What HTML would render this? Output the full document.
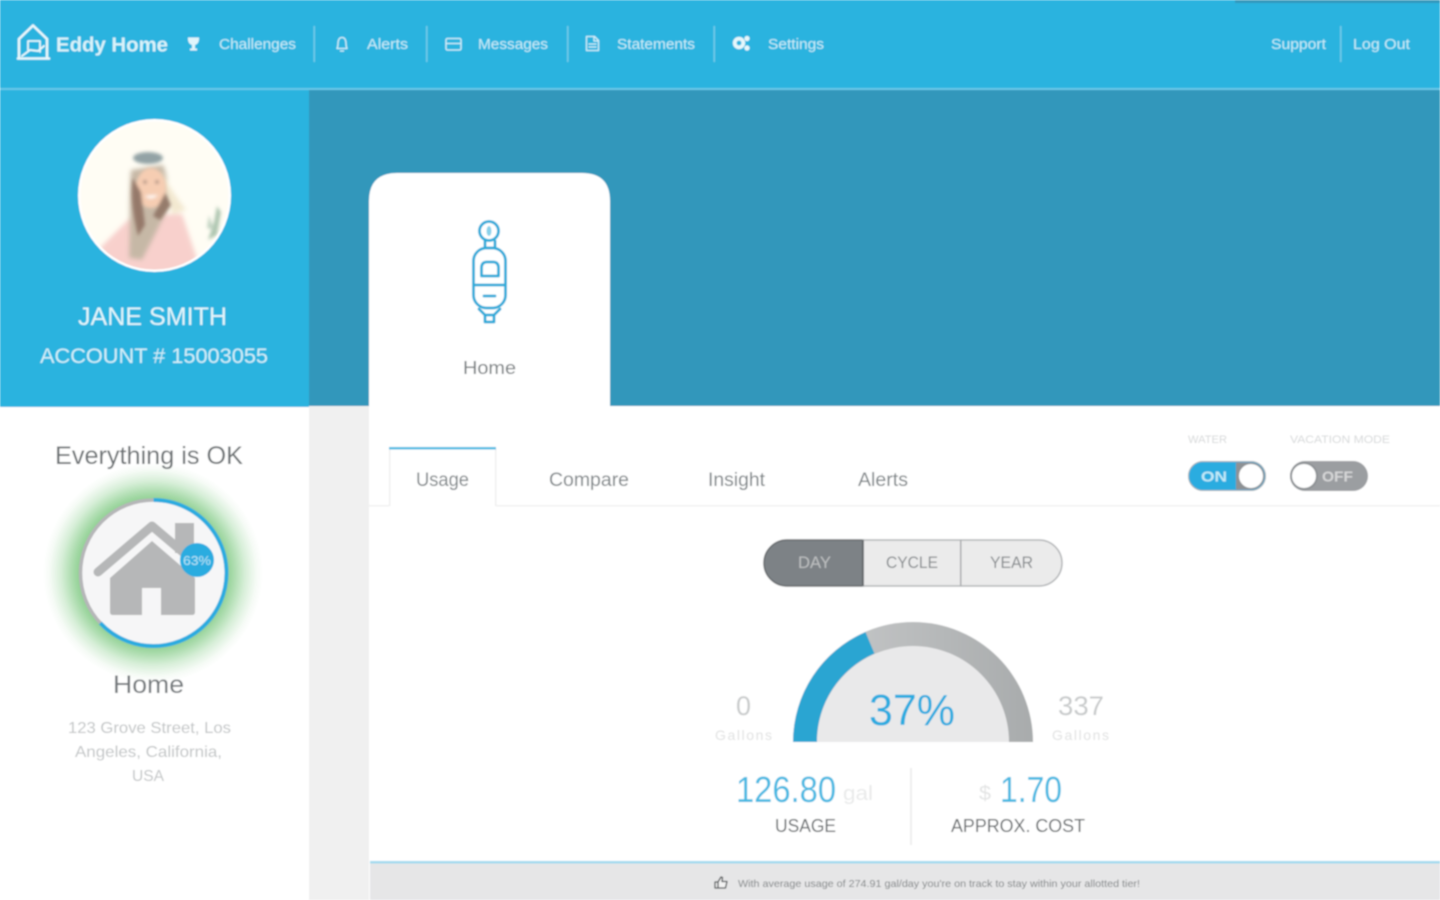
<!DOCTYPE html>
<html lang="en"><head><meta charset="utf-8"><title>Eddy Home</title>
<style>
html,body{margin:0;padding:0;width:1440px;height:900px;overflow:hidden;background:#fff}
svg{display:block;position:absolute;left:0;top:0}
text{font-family:"Liberation Sans",sans-serif}
.nav{fill:#c9edf8;font-size:15px}
.tab{fill:#7d8386;font-size:19px}
</style></head><body>
<svg width="1440" height="900" viewBox="0 0 1440 900" xmlns="http://www.w3.org/2000/svg">
<defs>
<filter id="soft" x="-2%" y="-2%" width="104%" height="104%"><feGaussianBlur stdDeviation="0.75"/></filter>
<filter id="photo" x="-20%" y="-20%" width="140%" height="140%"><feGaussianBlur stdDeviation="2.4"/></filter>
<filter id="photoS" x="-20%" y="-20%" width="140%" height="140%"><feGaussianBlur stdDeviation="1.6"/></filter>
<radialGradient id="glow" gradientUnits="userSpaceOnUse" cx="153" cy="573" r="110">
<stop offset="0.64" stop-color="#86cc89"/><stop offset="0.73" stop-color="#a9dbab"/><stop offset="0.84" stop-color="#d8efd9"/><stop offset="0.94" stop-color="#f6fbf6"/><stop offset="1" stop-color="#fff"/>
</radialGradient>
<clipPath id="av"><circle cx="154.500" cy="195.500" r="74"/></clipPath>
<clipPath id="gaugeClip"><rect x="780" y="610" width="270" height="132"/></clipPath>
<linearGradient id="ringGray" x1="0" y1="0" x2="1" y2="0"><stop offset="0.3" stop-color="#c0c2c3"/><stop offset="1" stop-color="#a8abac"/></linearGradient>
</defs>
<g filter="url(#soft)">
<!-- base regions -->
<rect width="1440" height="900" fill="#fff"/>
<rect width="1440" height="89" fill="#2bb3df"/>
<rect x="1235" y="0" width="205" height="3" fill="#3097bb"/>
<rect x="309" y="90" width="1131" height="316" fill="#3097bb"/>
<rect x="0" y="90" width="309" height="317" fill="#2bb3df"/>
<rect x="0" y="88" width="1440" height="2" fill="#69c8e8"/>
<rect x="309" y="406" width="60" height="494" fill="#f0f0f0"/>

<!-- logo -->
<g fill="none" stroke="#e8f8fc" stroke-width="2.600" stroke-linejoin="round" stroke-linecap="round">
<path d="M19 58V39L33 25.500 47 39V58"/>
<path d="M18 58.500H49"/>
<path d="M28 50V41H40V52" stroke-width="1.800"/>
<path d="M22 56L30 50L38 51L44 46" stroke-width="2"/>
</g>
<text x="56" y="51.500" font-size="20" font-weight="700" fill="#d9f3fa" textLength="112" lengthAdjust="spacingAndGlyphs">Eddy Home</text>

<!-- nav icons -->
<path d="M188 37.500H199C199.300 41.500 198 44 195 45V48.500H197V50.500H190V48.500H192V45C189 44 187.700 41.500 188 37.500Z" fill="#e0f5fb"/>
<g fill="none" stroke="#d6f1fa" stroke-width="1.300" stroke-linejoin="round" stroke-linecap="round">
<path d="M337 48.500C338.200 46.500 337.800 44 338.200 41.500C338.600 39 340 37.500 342 37.500C344 37.500 345.400 39 345.800 41.500C346.200 44 345.800 46.500 347 48.500Z"/>
<path d="M340.500 51H343.500"/>
<rect x="446" y="38.500" width="15" height="11.500" rx="1.500"/>
<path d="M446.500 43.500H460.500"/>
<path d="M586.500 36.500H594.500L598.500 40.500V50.500H586.500Z"/>
<path d="M589 44H596M589 47H596M594 37V41H598"/>
</g>
<g fill="#e6f7fb">
<circle cx="739" cy="43" r="6.200"/><circle cx="747" cy="38.500" r="2.600"/><circle cx="747" cy="48" r="2.600"/>
</g>
<circle cx="739" cy="43" r="2.400" fill="#2bb3df"/>

<!-- nav text -->
<text class="nav" x="219" y="49" textLength="77" lengthAdjust="spacingAndGlyphs">Challenges</text>
<text class="nav" x="367" y="49" textLength="41" lengthAdjust="spacingAndGlyphs">Alerts</text>
<text class="nav" x="478" y="49" textLength="70" lengthAdjust="spacingAndGlyphs">Messages</text>
<text class="nav" x="617" y="49" textLength="78" lengthAdjust="spacingAndGlyphs">Statements</text>
<text class="nav" x="768" y="49" textLength="56" lengthAdjust="spacingAndGlyphs">Settings</text>
<text class="nav" x="1271" y="49" textLength="55" lengthAdjust="spacingAndGlyphs">Support</text>
<text class="nav" x="1353" y="49" textLength="57" lengthAdjust="spacingAndGlyphs">Log Out</text>
<g fill="#72cbe9">
<rect x="313.500" y="26" width="1.500" height="36"/><rect x="426" y="26" width="1.500" height="36"/>
<rect x="567" y="26" width="1.500" height="36"/><rect x="713.500" y="26" width="1.500" height="36"/>
<rect x="1340" y="26" width="1.500" height="36"/>
</g>

<!-- avatar -->
<circle cx="154.500" cy="195.500" r="76.500" fill="#fff"/>
<circle cx="154.500" cy="195.500" r="74" fill="#fffdf4"/>
<g clip-path="url(#av)">
<g filter="url(#photo)">
<path d="M100 248L132 216L182 214L198 262L190 290H105Z" fill="#f8d0cc"/>
<path d="M131 170C129 195 130 225 129 258L142 260C150 245 160 225 166 212C170 200 168 175 163 165Z" fill="#c6b8a6"/>
<path d="M160 170C168 185 175 195 186 210L172 214Z" fill="#f3e8d0"/>
</g>
<g filter="url(#photoS)">
<ellipse cx="148" cy="158" rx="15" ry="6" fill="#93a3a5"/>
<ellipse cx="151" cy="188" rx="15" ry="20" fill="#f6cdb2"/>
<path d="M133 178C130 195 133 215 138 236L145 225L141 192Z" fill="#95796a"/>
<path d="M165 193L171 205L160 220L153 216Z" fill="#957c6c"/>
<circle cx="145" cy="182" r="1.600" fill="#85706a"/><circle cx="157" cy="182" r="1.600" fill="#85706a"/>
<path d="M145 196Q151 201 158 195Z" fill="#fff"/>
<path d="M208 240L214 222L217 206L221 212L217 235Z" fill="#aec6b0"/>
<path d="M209 215L214 230L207 228Z" fill="#c2d4c3"/>
</g>
</g>
<text x="78" y="325" font-size="25" fill="#e3f6fb" textLength="149" lengthAdjust="spacingAndGlyphs">JANE SMITH</text>
<text x="40" y="363" font-size="21" fill="#d3f0f9" textLength="228" lengthAdjust="spacingAndGlyphs">ACCOUNT # 15003055</text>

<!-- status panel -->
<circle cx="153" cy="573" r="110" fill="url(#glow)"/>
<text x="55" y="464" font-size="25" fill="#6b7072" textLength="188" lengthAdjust="spacingAndGlyphs">Everything is OK</text>
<circle cx="153.500" cy="573" r="73" fill="#f6f6f7"/>
<circle cx="153.500" cy="573" r="73" fill="none" stroke="#b5b6b8" stroke-width="3.500"/>
<path d="M153.500 500A73 73 0 1 1 100.300 623" fill="none" stroke="#2bace0" stroke-width="4"/>
<g fill="#b6b7b8">
<rect x="175" y="523" width="19" height="30"/>
<path d="M152 541L195 578V612Q195 615 192 615H161V588H142V615H113Q110 615 110 612V578Z"/>
</g>
<path d="M98 572L152 526L198 565" fill="none" stroke="#b6b7b8" stroke-width="9" stroke-linecap="round" stroke-linejoin="round"/>
<circle cx="197" cy="560" r="17" fill="#2bace0"/>
<text x="183" y="565" font-size="13" fill="#b9e6f6" textLength="28" lengthAdjust="spacingAndGlyphs">63%</text>
<text x="113" y="693" font-size="25" fill="#72777a" textLength="71" lengthAdjust="spacingAndGlyphs">Home</text>
<g font-size="16" fill="#c2c5c6">
<text x="68" y="733" textLength="163" lengthAdjust="spacingAndGlyphs">123 Grove Street, Los</text>
<text x="75" y="757" textLength="147" lengthAdjust="spacingAndGlyphs">Angeles, California,</text>
<text x="132" y="781" textLength="32" lengthAdjust="spacingAndGlyphs">USA</text>
</g>

<!-- content panel -->
<path d="M369 408V201Q369 173 397 173H582Q610 173 610 201V406H1440V900H369Z" fill="#fff"/>
<g fill="none" stroke="#2aabd9" stroke-width="2.800" stroke-linejoin="round" stroke-linecap="round">
<circle cx="489" cy="231" r="9.500"/>
<path d="M485 241V248H495V241"/>
<rect x="473.500" y="248" width="32" height="60" rx="13"/>
<path d="M474 285H505"/>
<path d="M481.500 276V268Q481.500 262 487 262H493Q498.500 262 498.500 268V276Z"/>
<path d="M484 296H495"/>
<path d="M479 309L485 315H494L500 309"/>
<path d="M485 315V322H494V315"/>
</g>
<ellipse cx="489" cy="231" rx="2.500" ry="5" fill="#2aabd9" opacity=".55"/>
<text x="463" y="374" font-size="18" fill="#767b7e" textLength="53" lengthAdjust="spacingAndGlyphs">Home</text>

<!-- tabs -->
<rect x="369" y="505" width="1071" height="1.500" fill="#f1f1f1"/>
<rect x="389" y="449" width="107" height="58" fill="#fff"/>
<rect x="389" y="449" width="1.500" height="57" fill="#efefef"/><rect x="495" y="449" width="1.500" height="57" fill="#efefef"/>
<rect x="389" y="447" width="107" height="2.500" fill="#48bce3"/>
<text class="tab" x="416" y="486" textLength="53" lengthAdjust="spacingAndGlyphs">Usage</text>
<text class="tab" x="549" y="486" textLength="80" lengthAdjust="spacingAndGlyphs">Compare</text>
<text class="tab" x="708" y="486" textLength="57" lengthAdjust="spacingAndGlyphs">Insight</text>
<text class="tab" x="858" y="486" textLength="50" lengthAdjust="spacingAndGlyphs">Alerts</text>

<!-- toggles -->
<text x="1188" y="443" font-size="11" fill="#d6d8d9" textLength="39" lengthAdjust="spacingAndGlyphs">WATER</text>
<text x="1290" y="443" font-size="11" fill="#d6d8d9" textLength="100" lengthAdjust="spacingAndGlyphs">VACATION MODE</text>
<rect x="1188" y="461" width="78" height="30" rx="15" fill="#dcdcdc"/>
<rect x="1188.500" y="461.500" width="77" height="29" rx="14.500" fill="#2bace0" stroke="#a8b0b4"/>
<path d="M1236 462.500H1251A13.500 13.500 0 0 1 1251 489.500H1236Z" fill="#8d9194"/>
<circle cx="1251" cy="476" r="12" fill="#fff"/>
<text x="1201" y="481.500" font-size="15" font-weight="700" fill="#c3eaf7" textLength="26" lengthAdjust="spacingAndGlyphs">ON</text>
<rect x="1290" y="461" width="78" height="30" rx="15" fill="#9b9ea1"/>
<circle cx="1304" cy="476" r="14" fill="#8d9194"/>
<circle cx="1304" cy="476" r="12" fill="#fff"/>
<text x="1322" y="481.500" font-size="15" font-weight="700" fill="#d5d6d7" textLength="31" lengthAdjust="spacingAndGlyphs">OFF</text>

<!-- segmented -->
<path d="M787 540H863V586H787A23 23 0 0 1 787 540Z" fill="#7d8286" stroke="#666a6d" stroke-width="1.500"/>
<path d="M863 540H1039A23 23 0 0 1 1039 586H863Z" fill="#ebebeb" stroke="#b4b6b8" stroke-width="1.500"/>
<rect x="862" y="540" width="1.800" height="46" fill="#5f6366"/>
<rect x="960" y="540" width="1.500" height="46" fill="#a9abad"/>
<g font-size="17">
<text x="798" y="568" fill="#bdbfc0" textLength="33" lengthAdjust="spacingAndGlyphs">DAY</text>
<text x="886" y="568" fill="#85898c" textLength="52" lengthAdjust="spacingAndGlyphs">CYCLE</text>
<text x="990" y="568" fill="#85898c" textLength="43" lengthAdjust="spacingAndGlyphs">YEAR</text>
</g>

<!-- gauge -->
<g clip-path="url(#gaugeClip)">
<circle cx="913" cy="742" r="120" fill="url(#ringGray)"/>
<path d="M793 742A120 120 0 0 1 865.500 632L874.500 653.500A96 96 0 0 0 817 742Z" fill="#29a5d2"/>
<circle cx="913" cy="742" r="96" fill="#e9e9ea"/>
</g>
<text x="869" y="725" font-size="44" fill="#2bace0" textLength="86" lengthAdjust="spacingAndGlyphs">37%</text>
<text x="736" y="715" font-size="27" fill="#c8cacb" textLength="15" lengthAdjust="spacingAndGlyphs">0</text>
<text x="1058" y="715" font-size="27" fill="#c8cacb" textLength="46" lengthAdjust="spacingAndGlyphs">337</text>
<text x="715" y="740" font-size="14" fill="#e0e1e1" textLength="57">Gallons</text>
<text x="1052" y="740" font-size="14" fill="#e0e1e1" textLength="57">Gallons</text>

<!-- stats -->
<text x="736" y="802" font-size="36" fill="#47b9e2" textLength="100" lengthAdjust="spacingAndGlyphs">126.80</text>
<text x="843" y="800" font-size="20" fill="#e9eaea" textLength="30" lengthAdjust="spacingAndGlyphs">gal</text>
<text x="979" y="800" font-size="20" fill="#e2e3e3" textLength="12" lengthAdjust="spacingAndGlyphs">$</text>
<text x="1000" y="802" font-size="36" fill="#47b9e2" textLength="62" lengthAdjust="spacingAndGlyphs">1.70</text>
<rect x="910" y="768" width="2" height="77" fill="#eeeeee"/>
<text x="775" y="832" font-size="18" fill="#63686a" textLength="61" lengthAdjust="spacingAndGlyphs">USAGE</text>
<text x="951" y="832" font-size="18" fill="#63686a" textLength="134" lengthAdjust="spacingAndGlyphs">APPROX. COST</text>

<!-- footer -->
<rect x="370" y="863" width="1070" height="37" fill="#e6e6e7"/>
<rect x="370" y="861" width="1070" height="2.500" fill="#a2daee"/>
<path d="M715 882H718V888H715ZM718 882L721 877L722.500 877.500L722 881.500H727L725.500 888H718Z" fill="#f3f3f3" stroke="#4d5153" stroke-width="1.300" stroke-linejoin="round"/>
<text x="738" y="887" font-size="10.500" fill="#7d8183" textLength="402" lengthAdjust="spacingAndGlyphs">With average usage of 274.91 gal/day you're on track to stay within your allotted tier!</text>
</g>
</svg>
</body></html>
